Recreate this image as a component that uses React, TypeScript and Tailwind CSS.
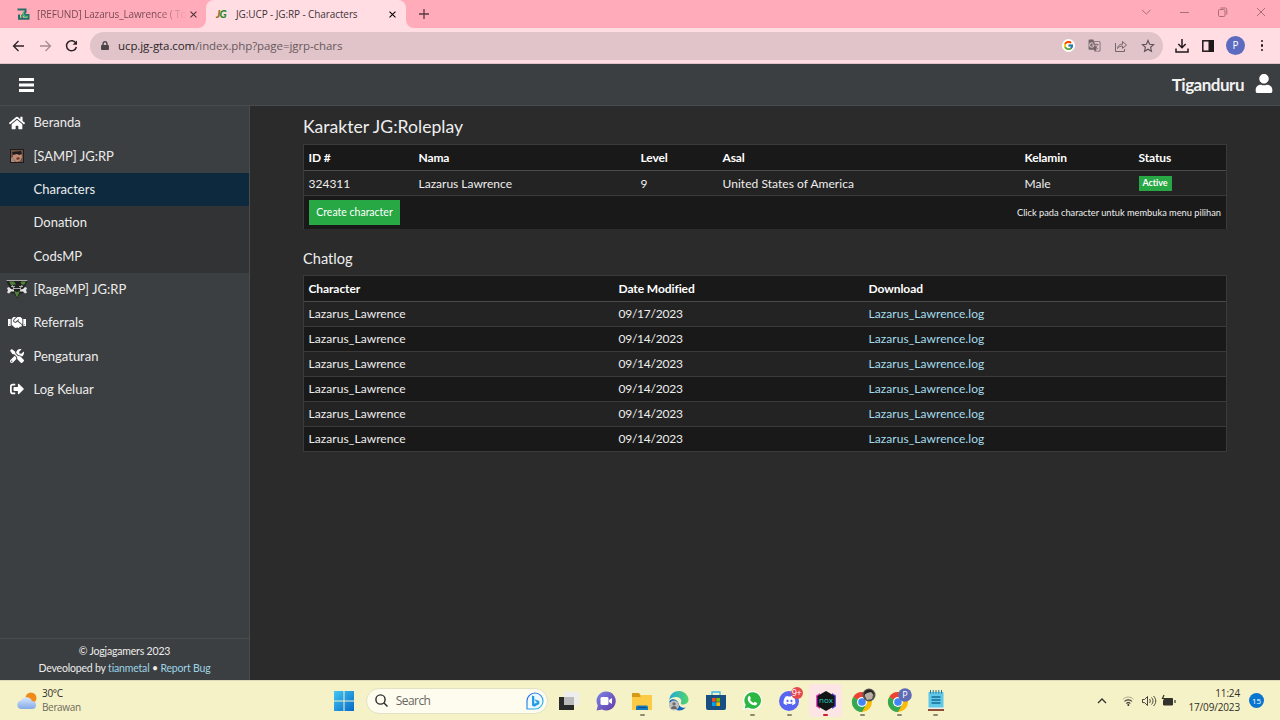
import type { ReactNode } from "react"
import {
  FaBars,
  FaUser,
  FaHome,
  FaHandshake,
  FaTools,
  FaSignOutAlt,
  FaLock,
  FaDiscord,
} from "react-icons/fa"
import { FcGoogle } from "react-icons/fc"
import { MdGTranslate } from "react-icons/md"

const logDates = ["09/17/2023", "09/14/2023", "09/14/2023", "09/14/2023", "09/14/2023", "09/14/2023"]

export default function App() {
  return (
    <div className="flex flex-col w-[1280px] h-[720px] overflow-hidden bg-[#2b2b2b] font-['Open_Sans','Noto_Sans',sans-serif]">
      <TabStrip />
      <Toolbar />
      <div className="flex flex-col h-[616px] font-['Lato',sans-serif] text-white">
        <header className="flex items-center justify-between h-[42px] pl-[19px] pr-[7px] bg-[#3c3f41] border-b border-[#484a4b]">
          <svg viewBox="0 0 15 14" className="w-[15px] h-[14px]" fill="#fff">
            <path d="M0 0h15v3H0zM0 5.500h15v3H0zM0 11h15v3H0z" />
          </svg>
          <div className="flex items-center gap-[11px]">
            <span className="text-[17px] font-bold tracking-[-0.5px] leading-5 text-[#f2f2f2]">Tiganduru</span>
            <FaUser className="w-[18px] h-[19px] -mt-0.5" />
          </div>
        </header>
        <div className="flex flex-1 min-h-0">
          <Sidebar />
          <main className="flex-1 pl-[53px] pr-[53px] pt-[9px]">
            <Characters />
            <Chatlog />
          </main>
        </div>
      </div>
      <Taskbar />
    </div>
  )
}

const CloseX = ({ className }: { className?: string }) => (
  <svg viewBox="0 0 8 8" className={`w-[7px] h-[7px] shrink-0 ${className ?? ""}`} stroke="currentColor" strokeWidth="1.2" fill="none">
    <path d="M.6.6l6.8 6.8M7.4.6L.6 7.4" />
  </svg>
)

const TabStrip = () => (
  <div className="flex h-7 shrink-0 bg-[#ffdde3] text-[10px] text-[#4b3237]">
    <div className="flex items-center w-[206px] pl-[17px] pr-[9px] rounded-br-lg bg-[#ffabba]">
      <svg viewBox="0 0 13 12" className="w-[13px] h-3 shrink-0" fill="none">
        <path d="M.5 1.500h8v2.500L5 8v2.500" stroke="#246f67" strokeWidth="2" />
        <path d="M2 6.500v4.200h9.500V7H7.500" stroke="#246f67" strokeWidth="2" />
        <path d="M6.500 3.500v3.200L4 9.500M7 8.500h4" stroke="#35c568" strokeWidth="1.300" />
      </svg>
      <span className="ml-[7px] w-[150px] shrink-0 whitespace-nowrap tracking-[-0.12px] bg-linear-to-r from-[#73474f] from-80% to-[#ffabba] bg-clip-text text-transparent">
        [REFUND] Lazarus_Lawrence ( To
      </span>
      <CloseX className="ml-[3px]" />
    </div>
    <div className="w-[200px] bg-[#ffabba]">
      <div className="flex items-center h-7 pl-[10px] pr-[10px] rounded-t-lg bg-[#ffdde3]">
        <span className="w-[14px] text-[10.500px] font-black italic tracking-[-0.8px] leading-3 font-['Lato',sans-serif] text-[#2c8b27]">
          <span className="text-[#8d702c]">J</span>G
        </span>
        <span className="ml-[6px] flex-1 whitespace-nowrap tracking-[-0.1px] text-[#3f3437]">JG:UCP - JG:RP - Characters</span>
        <CloseX className="text-black" />
      </div>
    </div>
    <div className="flex flex-1 items-center pl-[13px] pr-[14px] rounded-bl-lg bg-[#ffabba]">
      <svg viewBox="0 0 10 10" className="w-[10px] h-[10px]" stroke="#5b3940" strokeWidth="1.3">
        <path d="M5 0v10M0 5h10" />
      </svg>
      <svg viewBox="0 0 126 12" className="ml-auto w-[126px] h-3 -mt-1" fill="none" stroke="#aa6c76" strokeWidth="1">
        <path d="M2 4l4.300 4 4.200-4M40 6.500h9M117 2l8 8M125 2l-8 8" />
        <rect x="78.500" y="3.500" width="6.500" height="7" rx="1.200" />
        <path d="M80.500 2h4.800a1.500 1.500 0 0 1 1.500 1.500v5" />
      </svg>
    </div>
  </div>
)

const Toolbar = () => (
  <div className="flex items-center h-9 shrink-0 pl-3 pr-[17px] bg-[#ffdde3] border-b border-[#dfc3c8]">
    <svg viewBox="0 0 67 14" className="w-[67px] h-[14px]" fill="none" strokeWidth="1.300">
      <path d="M12 7H1.500M6.500 2L1.500 7l5 5" stroke="#2b2327" />
      <path d="M28 7h10M33.500 2l5 5-5 5" stroke="#a78c92" />
      <path d="M64 4.500A5 5 0 1 0 64.400 8" stroke="#2b2327" strokeWidth="1.500" />
      <path d="M65 1.500v4.300h-4.300z" fill="#2b2327" />
    </svg>
    <div className="flex items-center ml-[11px] w-[1073px] h-7 pl-[11px] pr-2 rounded-full bg-[#e0c4c9]">
      <FaLock className="w-2 h-[9px] text-[#4b4548]" />
      <span className="ml-[9px] text-[11.500px] tracking-[-0.080px] text-[#68585c]">
        <span className="text-[#2b2528]">ucp.jg-gta.com</span>/index.php?page=jgrp-chars
      </span>
      <div className="flex items-center ml-auto gap-[13px] text-[#76666a]">
        <span className="grid place-items-center w-[13px] h-[13px] rounded-full bg-white">
          <FcGoogle className="w-[11px] h-[11px]" />
        </span>
        <MdGTranslate className="w-[13px] h-[13px]" />
        <svg viewBox="0 0 14 14" className="w-[14px] h-[14px]" fill="none" stroke="currentColor">
          <path d="M1.500 4v8.500h9V10M3.500 9.500c.5-3.500 2.500-4.300 5-4.300V2.500L12.500 6 8.500 9.300V7c-2 0-3.500.5-5 2.500z" />
        </svg>
        <svg viewBox="0 0 14 14" className="w-[14px] h-[14px]" fill="none" stroke="#5c4f53" strokeWidth="1.100">
          <path d="M7 1.500l1.600 3.700 4 .4-3 2.700.9 4L7 10.200l-3.500 2.100.9-4-3-2.700 4-.4z" />
        </svg>
      </div>
    </div>
    <svg viewBox="0 0 14 14" className="ml-3 w-[14px] h-[14px]" fill="none" stroke="#20191c" strokeWidth="1.500">
      <path d="M7 0v8.500M3.300 5L7 8.700 10.700 5M1 9.500V13h12V9.500" />
    </svg>
    <svg viewBox="0 0 12 12" className="ml-[13px] w-3 h-3">
      <rect x=".8" y=".8" width="10.400" height="10.400" fill="none" stroke="#20191c" strokeWidth="1.500" />
      <path d="M6.500 0H12v12H6.500z" fill="#20191c" />
    </svg>
    <span className="grid place-items-center ml-3 w-[19px] h-[19px] rounded-full bg-[#5c6bc0] text-[10px] text-white">P</span>
    <div className="flex flex-col gap-[2px] ml-auto">
      <i className="w-[2.500px] h-[2.500px] rounded-full bg-[#20191c]" />
      <i className="w-[2.500px] h-[2.500px] rounded-full bg-[#20191c]" />
      <i className="w-[2.500px] h-[2.500px] rounded-full bg-[#20191c]" />
    </div>
  </div>
)

const NavItem = ({ icon, children, className }: { icon?: ReactNode; children: ReactNode; className?: string }) => (
  <div className={`flex items-center h-[33.350px] ${className ?? ""}`}>
    <span className="flex justify-center w-[33.500px]">{icon}</span>
    <span className="pt-px text-[13px] text-[#ececec]">{children}</span>
  </div>
)

const Sidebar = () => (
  <aside className="flex flex-col w-[250px] shrink-0 bg-[#3c3f41] border-r border-[#4a4c4e]">
    <nav className="flex-1">
      <NavItem icon={<FaHome className="w-4 h-4" />}>Beranda</NavItem>
      <NavItem icon={<SampFace />}>[SAMP] JG:RP</NavItem>
      <NavItem className="bg-[#0d293e]">Characters</NavItem>
      <NavItem className="bg-[#313335]">Donation</NavItem>
      <NavItem className="bg-[#313335]">CodsMP</NavItem>
      <NavItem icon={<RageEmblem />}>[RageMP] JG:RP</NavItem>
      <NavItem icon={<FaHandshake className="w-[18px] h-[17px]" />}>Referrals</NavItem>
      <NavItem icon={<FaTools className="w-[14px] h-[14px]" />}>Pengaturan</NavItem>
      <NavItem icon={<FaSignOutAlt className="w-[14px] h-[14px]" />}>Log Keluar</NavItem>
    </nav>
    <footer className="h-[42px] pt-1 border-t border-[#4a4c4e] text-center text-[10.500px] tracking-[-0.180px] leading-[16.600px] text-[#ececec]">
      <p>© Jogjagamers 2023</p>
      <p>
        Deveoloped by <a className="text-[#9bd3e6]">tianmetal</a> • <a className="text-[#9bd3e6]">Report Bug</a>
      </p>
    </footer>
  </aside>
)

const SampFace = () => (
  <svg viewBox="0 0 14 14" className="w-[14px] h-[14px]">
    <path d="M0 0h14v14H0z" fill="#201b1a" />
    <path d="M1 1h12v12H1z" fill="#6e5146" />
    <path d="M3 4l8-1 1 5-2 4-4 1-3-4z" fill="#c08a74" />
    <path d="M2 3l9-1 1 3-3 1-2-1-4 1z" fill="#211b1b" />
    <path d="M6 9l3-1 1 2-3 1z" fill="#73382c" />
    <path d="M1 9l2-1 2 5H1z" fill="#a08a7b" />
  </svg>
)

const RageEmblem = () => (
  <svg viewBox="0 0 24 20" className="w-6 h-5">
    <path d="M1 1.500h22l-2 4-2 3 2 2-4 4h-2l-3 5-3-5H7l-4-4 2-2-2-3z" fill="#202120" />
    <path d="M4 2.500h5l2 3-5 .5zM16 2.500h5l-2 3.500-3-1zM9 12l3 1 3-1-3 6.500z" fill="#4d8237" />
    <path d="M1.500 1.500h21M6 7.500h4M14 7.500h4M8 9.500h8M7 6l2 4M17 6l-2 4" fill="none" stroke="#ccc" strokeWidth=".8" />
    <path d="M2 9l2-1 2 2 3 .5v2H6l-2 2-2-1 1-2zM22 9l-2-1-2 2-3 .5v2h3l2 2 2-1-1-2z" fill="#e4e4e4" />
  </svg>
)

const Characters = () => (
  <section>
    <h1 className="h-[29px] text-[17.600px] leading-[24px] text-[#eee]">Karakter JG:Roleplay</h1>
    <div className="w-[924px] border border-b-0 border-[#3a3a3a] bg-[#191919] text-[12px] text-[#eee]">
      <div className="grid grid-cols-[110px_222px_82px_302px_114px_1fr] items-center h-[26px] pl-[4.500px] border-b border-[#4b4b4b] font-bold tracking-[-0.120px] text-white">
        <span>ID #</span>
        <span>Nama</span>
        <span>Level</span>
        <span>Asal</span>
        <span>Kelamin</span>
        <span>Status</span>
      </div>
      <div className="grid grid-cols-[110px_222px_82px_302px_114px_1fr] items-center h-[25px] pl-[4.500px] pt-px border-b border-[#3a3a3a] bg-[#232323]">
        <span>324311</span>
        <span>Lazarus Lawrence</span>
        <span>9</span>
        <span className="tracking-[0.040px]">United States of America</span>
        <span>Male</span>
        <span className="flex items-center justify-center w-[33px] h-[15px] -mt-px bg-[#28a745] text-[9px] font-bold tracking-[-0.1px] text-white">
          Active
        </span>
      </div>
      <div className="flex items-center justify-between h-[33px] px-[5px]">
        <button className="w-[91px] h-[25px] bg-[#28a745] text-[10.500px] text-white">Create character</button>
        <span className="text-[9.250px]">Click pada character untuk membuka menu pilihan</span>
      </div>
    </div>
  </section>
)

const Chatlog = () => (
  <section className="mt-[18px]">
    <h2 className="h-[28px] text-[14.600px] leading-6 text-[#eee]">Chatlog</h2>
    <div className="w-[924px] border border-b-0 border-[#3a3a3a] bg-[#191919] text-[12px] text-[#eee]">
      <div className="grid grid-cols-[310px_250px_1fr] items-center h-[26px] pl-[4.500px] border-b border-[#4b4b4b] font-bold tracking-[-0.080px] text-white">
        <span>Character</span>
        <span>Date Modified</span>
        <span>Download</span>
      </div>
      {logDates.map((date, i) => (
        <div
          key={i}
          className="grid grid-cols-[310px_250px_1fr] items-center h-[25px] pl-[4.500px] border-b border-[#3a3a3a] odd:bg-[#191919] even:bg-[#232323]"
        >
          <span className="tracking-[0.080px]">Lazarus_Lawrence</span>
          <span className="tracking-[-0.240px]">{date}</span>
          <a className="tracking-[0.060px] text-[#a5dced]">Lazarus_Lawrence.log</a>
        </div>
      ))}
    </div>
  </section>
)

const TaskIcon = ({ children, dot }: { children: ReactNode; dot?: string }) => (
  <div className="relative flex items-center justify-center w-[36.700px] h-10">
    {children}
    {dot && <i className={`absolute bottom-[5px] w-[5px] h-[2px] rounded-full ${dot}`} />}
  </div>
)

const Chrome = ({ children }: { children: ReactNode }) => (
  <svg viewBox="0 0 26 26" className="w-[26px] h-[26px]">
    <circle cx="12" cy="14" r="10" fill="#fbbc05" />
    <path d="M12 14L3.300 9A10 10 0 0 1 20.700 9z" fill="#ea4335" />
    <path d="M12 14L3.300 9A10 10 0 0 0 12 24l4.500-8z" fill="#34a853" />
    <circle cx="12" cy="14" r="5" fill="#fff" />
    <circle cx="12" cy="14" r="3.800" fill="#4285f4" />
    {children}
  </svg>
)

const Taskbar = () => (
  <div className="flex items-center h-10 shrink-0 bg-[#f6f2c8] border-t border-[#dedab7] text-[10px] text-[#302e29]">
    <div className="flex items-center w-[326px] pl-4 gap-1">
      <svg viewBox="0 0 22 18" className="w-[22px] h-[18px]">
        <defs>
          <linearGradient id="cloud" x2="0" y2="1">
            <stop stopColor="#d9e9fb" />
            <stop offset="1" stopColor="#83a9e8" />
          </linearGradient>
        </defs>
        <circle cx="15" cy="6" r="5.500" fill="#f08b17" />
        <path d="M5 17a4.300 4.300 0 0 1 0-8.500A6 6 0 0 1 16 9a4 4 0 0 1 0 8z" fill="url(#cloud)" />
      </svg>
      <div className="leading-[13.500px]">
        <p className="tracking-[-0.3px]">30°C</p>
        <p className="tracking-[-0.350px] text-[#6d6a5a]">Berawan</p>
      </div>
    </div>
    <TaskIcon>
      <svg viewBox="0 0 20 20" className="w-5 h-5">
        <defs>
          <linearGradient id="win" x2="1" y2="1">
            <stop stopColor="#42c8f3" />
            <stop offset="1" stopColor="#0668c8" />
          </linearGradient>
        </defs>
        <path d="M0 0h9.500v9.500H0zM10.500 0H20v9.500h-9.500zM0 10.500h9.500V20H0zM10.500 10.500H20V20h-9.500z" fill="url(#win)" />
      </svg>
    </TaskIcon>
    <div className="flex items-center ml-[3px] mr-[3px] w-[182px] h-[26px] pl-2 pr-[3px] rounded-full bg-[#fdfcef] border border-[#e4e1c4]">
      <svg viewBox="0 0 13 13" className="w-[13px] h-[13px]" fill="none" stroke="#28282a" strokeWidth="1.400">
        <circle cx="5.500" cy="5.500" r="4.600" />
        <path d="M9 9l3.500 3.500" />
      </svg>
      <span className="ml-2 text-[12px] tracking-[-0.550px] text-[#69675f]">Search</span>
      <svg viewBox="0 0 18 18" className="ml-auto w-[18px] h-[18px]">
        <defs>
          <linearGradient id="bing" x2="1" y2="1">
            <stop stopColor="#2868df" />
            <stop offset="1" stopColor="#35c3ee" />
          </linearGradient>
        </defs>
        <path d="M1 17V9a8 8 0 1 1 8 8z" fill="#eefaff" stroke="url(#bing)" strokeWidth="1.200" />
        <path d="M6 3.500l2.300.8v7.500l3-1.500-1.800-1-.7-2 4.500 1.700v3L8.300 14.800 6 13.500z" fill="#269ce6" />
      </svg>
    </div>
    <TaskIcon>
      <svg viewBox="0 0 20 20" className="w-5 h-5">
        <path d="M0 6h15v13H0z" fill="#292a29" />
        <path d="M5 1h15v13H5z" fill="#eee" />
        <path d="M5 6h10v8H5z" fill="#bbb" />
      </svg>
    </TaskIcon>
    <TaskIcon>
      <svg viewBox="0 0 20 20" className="w-5 h-5">
        <defs>
          <linearGradient id="chat" x2="1" y2="1">
            <stop stopColor="#7b83e8" />
            <stop offset="1" stopColor="#643da6" />
          </linearGradient>
        </defs>
        <path d="M10 .5a9.500 9.500 0 1 1-4 18L.5 19.500l1.300-4.800A9.500 9.500 0 0 1 10 .5z" fill="url(#chat)" />
        <rect x="4.500" y="6" width="8" height="8" rx="1.500" fill="#fff" />
        <path d="M13 9l3-2v6l-3-2z" fill="#fff" />
      </svg>
    </TaskIcon>
    <TaskIcon dot="bg-[#8c8972]">
      <svg viewBox="0 0 20 18" className="w-5 h-[18px]">
        <path d="M0 1h7l2 3h11v3H0z" fill="#d69a16" />
        <path d="M0 5h8l1.500-2H20v15H0z" fill="#fbcb45" />
        <path d="M4 18v-3.500l1-1h10l1 1V18z" fill="#1678bc" />
        <path d="M6 15.500h8" stroke="#0b4e91" />
      </svg>
    </TaskIcon>
    <TaskIcon>
      <svg viewBox="0 0 20 20" className="w-5 h-5">
        <defs>
          <linearGradient id="edge" x2="1">
            <stop stopColor="#20a9dc" />
            <stop offset="1" stopColor="#55d568" />
          </linearGradient>
        </defs>
        <path d="M.3 10A9.800 9.800 0 0 0 17 16.500c-4 1-7-1-7.500-4.500C8 8 3 7 .3 10z" fill="#1268b5" />
        <path d="M.3 9C1-1 14-3 18.500 5c2.500 5 0 8-4 8.500-3 .3-3-1.500-2.300-2.500C13 8 10 6 7 6 4 6 1.500 7 .3 9z" fill="url(#edge)" />
        <circle cx="5" cy="14.500" r="5" fill="#bebebe" />
        <circle cx="5" cy="12.800" r="1.600" fill="#686868" />
        <path d="M2 18c0-4 6-4 6 0z" fill="#686868" />
      </svg>
    </TaskIcon>
    <TaskIcon>
      <svg viewBox="0 0 20 20" className="w-5 h-5">
        <path d="M6 5V1h8v4" fill="none" stroke="#38b9ec" strokeWidth="1.300" />
        <path d="M0 4h20v13a2 2 0 0 1-2 2H2a2 2 0 0 1-2-2z" fill="#174f83" />
        <path d="M6 7h3.700v3.700H6z" fill="#f25022" />
        <path d="M10.300 7H14v3.700h-3.700z" fill="#7fba00" />
        <path d="M6 11.300h3.700V15H6z" fill="#00a4ef" />
        <path d="M10.300 11.300H14V15h-3.700z" fill="#ffb900" />
      </svg>
    </TaskIcon>
    <TaskIcon dot="bg-[#8c8972]">
      <svg viewBox="0 0 20 20" className="w-[19px] h-[19px]">
        <path d="M10 0a10 10 0 1 1-5 18.700L0 20l1.400-5A10 10 0 0 1 10 0z" fill="#fff" />
        <path d="M10 1.300a8.700 8.700 0 1 1-4.500 16L1.800 18.300l1-3.700A8.700 8.700 0 0 1 10 1.300z" fill="#2bb741" />
        <path d="M7 5l1.400 3-1 1c.8 1.800 2 2.800 3.700 3.600l1.200-1.200 2.700 1.300c0 2-1.500 2.700-3 2.400C8 14.500 5 11.500 5 8c0-1.500 1-2.800 2-3z" fill="#fff" />
      </svg>
    </TaskIcon>
    <TaskIcon dot="bg-[#8c8972]">
      <span className="grid place-items-center w-5 h-5 rounded-full bg-[#5865f2]">
        <FaDiscord className="w-[13px] h-[13px] text-white" />
      </span>
      <span className="absolute top-[6px] right-[5px] grid place-items-center w-3 h-3 rounded-full bg-[#e6484c] text-[9px] leading-3 tracking-[-0.5px] text-white">
        9+
      </span>
    </TaskIcon>
    <TaskIcon dot="bg-[#c92221]">
      <span className="grid place-items-center w-[33px] h-[33px] rounded-[3px] bg-[#fce5e4]">
        <svg viewBox="0 0 20 20" className="w-5 h-5">
          <path d="M0 4.500L4 2v16l-4-2.500z" fill="#ef42c8" />
          <path d="M20 4.500L16 2v16l4-2.500z" fill="#6652df" />
          <path d="M10 0l8.700 5v10L10 20l-8.700-5V5z" fill="#121616" />
          <text x="10" y="12.300" textAnchor="middle" fontSize="8" fill="#2bd3c6" fontFamily="Open Sans">
            nox
          </text>
        </svg>
      </span>
    </TaskIcon>
    <TaskIcon dot="bg-[#8c8972]">
      <Chrome>
        <circle cx="19" cy="7" r="6.500" fill="#555450" />
        <path d="M15 8c-1-7 8-7 8-1l-1 4-5 1z" fill="#b9aea5" />
        <path d="M14 7c0-7 10-7 10 0l-3-3-4 1z" fill="#242322" />
      </Chrome>
    </TaskIcon>
    <TaskIcon dot="bg-[#8c8972]">
      <Chrome>
        <circle cx="19" cy="7" r="6.800" fill="#5f6cb5" />
        <text x="19" y="10.300" textAnchor="middle" fontSize="9" fill="#fff">
          P
        </text>
      </Chrome>
    </TaskIcon>
    <TaskIcon dot="bg-[#8c8972]">
      <svg viewBox="0 0 16 21" className="w-4 h-[21px]">
        <path d="M.5 2h15v17H.5z" fill="#60c8e8" />
        <path d="M0 18.500h16V21H0z" fill="#8e4f37" />
        <path d="M0 17.500h16v1.500H0z" fill="#eee" />
        <path d="M2.500 0v3.500M5.200 0v3.500M8 0v3.500M10.800 0v3.500M13.500 0v3.500" stroke="#2a7391" />
        <path d="M3.500 7h9M3.500 10h9M3.500 13h9" stroke="#176e95" strokeWidth="1.300" />
      </svg>
    </TaskIcon>
    <div className="flex items-center ml-auto mr-4">
      <svg viewBox="0 0 80 14" className="w-20 h-[14px]" fill="none" stroke="#34322d">
        <path d="M2 9l4-4 4 4" strokeWidth="1.300" />
        <path d="M27 5.300c3-3 7.500-3 10.500 0" stroke="#aaa78b" />
        <path d="M28.500 7.500c2-2.200 5.500-2.200 7.500 0M30.300 9.500c1-1.200 3-1.200 4 0" strokeWidth="1.100" />
        <circle cx="32.300" cy="11" r="1" fill="#34322d" stroke="none" />
        <path d="M46.500 5.500h2L51.500 2.500v9L48.500 8.600h-2zM53.500 5c1 1 1 3 0 4M55.500 3.500c2 2 2 5 0 7M57.500 2c3 3 3 7 0 10" strokeWidth=".9" />
        <path d="M68.500 4.500h8v6.500H67.500V7.500z" fill="#34322d" />
        <path d="M79 6v3M68 1l-1.500 3.500h2.500L67.500 8" strokeWidth="1.200" />
      </svg>
      <div className="w-[64px] text-right leading-[13.500px] tracking-[-0.150px] whitespace-nowrap">
        <p>11:24</p>
        <p>17/09/2023</p>
      </div>
      <span className="grid place-items-center ml-[9px] w-[15px] h-[15px] rounded-full bg-[#0875d1] text-[8px] text-white">15</span>
    </div>
  </div>
)
